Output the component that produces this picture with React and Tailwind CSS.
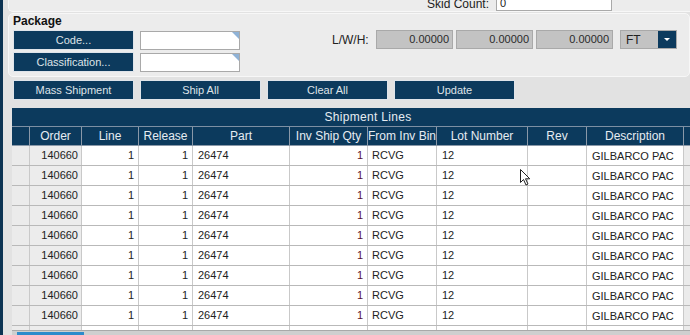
import React from "react";

const cols = [
  { w: 18, label: "" },
  { w: 52, label: "Order" },
  { w: 57, label: "Line" },
  { w: 54, label: "Release" },
  { w: 97, label: "Part" },
  { w: 78, label: "Inv Ship Qty" },
  { w: 69, label: "From Inv Bin" },
  { w: 91, label: "Lot Number" },
  { w: 59, label: "Rev" },
  { w: 97, label: "Description" },
  { w: 28, label: "" },
];

const rows = Array.from({ length: 10 }, () => ({
  order: "140660",
  line: "1",
  release: "1",
  part: "26474",
  qty: "1",
  bin: "RCVG",
  lot: "12",
  rev: "",
  desc: "GILBARCO PAC",
}));

function NavyButton({ children, className = "" }) {
  return (
    <button
      className={
        "w-[121px] h-[20px] bg-[#0c3a5d] border border-[#dfe4ea] text-[#dfe3e8] text-[11px] flex items-center justify-center " +
        className
      }
    >
      {children}
    </button>
  );
}

function CornerInput() {
  return (
    <div className="relative w-[100px] h-[19px] bg-white border border-[#a9a9a9]">
      <div className="absolute top-0 right-0 w-0 h-0 border-t-[7px] border-t-[#8fb2d6] border-l-[7px] border-l-transparent" />
    </div>
  );
}

function GrayNum() {
  return (
    <div className="w-[77px] h-[19px] bg-[#c3c3c3] border border-[#a9a9a9] flex items-center justify-end pr-[3px] text-[#2a2a2a]">
      0.00000
    </div>
  );
}

export default function App() {
  return (
    <div className="relative w-[690px] h-[335px] overflow-hidden bg-[#e2e2e2] flex font-['Liberation_Sans',Arial,sans-serif] text-[11px] text-[#222]">
      {/* window frame strip */}
      <div className="w-[3px] bg-[#0c3352] shrink-0" />

      <div className="flex-1 flex flex-col min-w-0">
        {/* top panel */}
        <div className="ml-[5px] h-[12px] bg-[#ececec] rounded-bl-[5px] border-b border-l border-[#f7f7f7] flex items-end overflow-hidden">
          <div className="ml-[418px] text-[12px] leading-[12px] mb-[1px] text-[#222]">Skid Count:</div>
          <div className="ml-[7px] w-[116px] h-[16px] bg-white border border-[#a9a9a9] flex items-center pl-[3px] leading-none text-[11px]">
            0
          </div>
        </div>

        {/* package panel */}
        <div className="ml-[5px] mt-[1px] h-[64px] bg-[#ececec] rounded-[5px] border border-[#f7f7f7] px-[4px] flex flex-col">
          <div className="font-bold text-[12px] leading-[12px] mt-[1px] text-[#111]">Package</div>
          <div className="mt-[3px] flex">
            <div className="flex flex-col gap-[2px]">
              <NavyButton>Code...</NavyButton>
              <NavyButton>Classification...</NavyButton>
            </div>
            <div className="ml-[6px] flex flex-col gap-[3px] pt-[1px]">
              <CornerInput />
              <CornerInput />
            </div>
            <div className="ml-[92px] flex items-start gap-[3px]">
              <div className="w-[41px] h-[19px] flex items-center text-[12px] text-[#222]">L/W/H:</div>
              <GrayNum />
              <GrayNum />
              <GrayNum />
              <div className="ml-[4px] w-[57px] h-[19px] flex border border-[#a9a9a9] bg-[#c3c3c3]">
                <div className="flex-1 flex items-center pl-[5px] text-[12px] text-[#222]">FT</div>
                <div className="w-[18px] bg-[#0c3a5d] flex items-center justify-center">
                  <div className="w-0 h-0 border-l-[3px] border-r-[3px] border-t-[3px] border-l-transparent border-r-transparent border-t-white" />
                </div>
              </div>
            </div>
          </div>
        </div>

        {/* action buttons */}
        <div className="ml-[10px] mt-[3px] flex gap-[6px]">
          <NavyButton>Mass Shipment</NavyButton>
          <NavyButton>Ship All</NavyButton>
          <NavyButton>Clear All</NavyButton>
          <NavyButton>Update</NavyButton>
        </div>

        {/* shipment lines table */}
        <div className="ml-[9px] mt-[8px] flex-1 flex flex-col min-h-0 w-[712px]">
          <div className="h-[19px] bg-[#0c3a5d] text-[#e6ecf2] text-[12px] tracking-[0.3px] flex items-center justify-center border-b border-[#7d8fa3]">
            Shipment Lines
          </div>
          <div className="h-[19px] bg-[#0c3a5d] flex border-b border-[#8a98a8]">
            {cols.map((c, i) => (
              <div
                key={i}
                style={{ width: c.w }}
                className="shrink-0 h-full border-r border-[#8a98a8] text-[#e6ecf2] text-[12px] flex items-center justify-center whitespace-nowrap overflow-hidden"
              >
                {c.label}
              </div>
            ))}
          </div>
          <div className="flex-1 overflow-hidden">
            {rows.map((r, i) => (
              <div key={i} className="h-[20px] flex border-b border-[#b9b9b9] bg-white">
                <div className="w-[18px] shrink-0 bg-[#ebebeb] border-r border-[#c9c9c9]" />
                <div className="w-[52px] shrink-0 bg-[#ececec] border-r border-[#c9c9c9] flex items-center justify-end pr-[3px]">
                  {r.order}
                </div>
                <div className="w-[57px] shrink-0 border-r border-[#c9c9c9] flex items-center justify-end pr-[4px]">
                  {r.line}
                </div>
                <div className="w-[54px] shrink-0 border-r border-[#c9c9c9] flex items-center justify-end pr-[4px]">
                  {r.release}
                </div>
                <div className="w-[97px] shrink-0 border-r border-[#c9c9c9] flex items-center pl-[5px]">
                  {r.part}
                </div>
                <div className="w-[78px] shrink-0 border-r border-[#c9c9c9] flex items-center justify-end pr-[4px] text-[#5a1030]">
                  {r.qty}
                </div>
                <div className="w-[69px] shrink-0 border-r border-[#c9c9c9] flex items-center pl-[4px]">
                  {r.bin}
                </div>
                <div className="w-[91px] shrink-0 border-r border-[#c9c9c9] flex items-center pl-[5px]">
                  {r.lot}
                </div>
                <div className="w-[59px] shrink-0 border-r border-[#c9c9c9] flex items-center">{r.rev}</div>
                <div className="w-[97px] shrink-0 border-r border-[#c9c9c9] flex items-start pt-[2px] pl-[5px] whitespace-nowrap">
                  {r.desc}
                </div>
                <div className="w-[28px] shrink-0 bg-[#ebebeb]" />
              </div>
            ))}
          </div>
          {/* horizontal scrollbar */}
          <div className="h-[5px] bg-[#cfcfcf] border-t border-[#a9a9a9] flex">
            <div className="ml-[5px] mt-[1px] w-[67px] bg-[#2e8bcb]" />
          </div>
        </div>
      </div>

      {/* mouse cursor */}
      <svg className="absolute left-[520px] top-[169px]" width="11" height="17" viewBox="0 0 11 17">
        <path d="M0.5 0.5 L0.5 13.5 L3.5 10.5 L6 16 L8 15 L5.5 9.8 L9.8 9.8 Z" fill="white" stroke="#222" strokeWidth="1" />
      </svg>
    </div>
  );
}
